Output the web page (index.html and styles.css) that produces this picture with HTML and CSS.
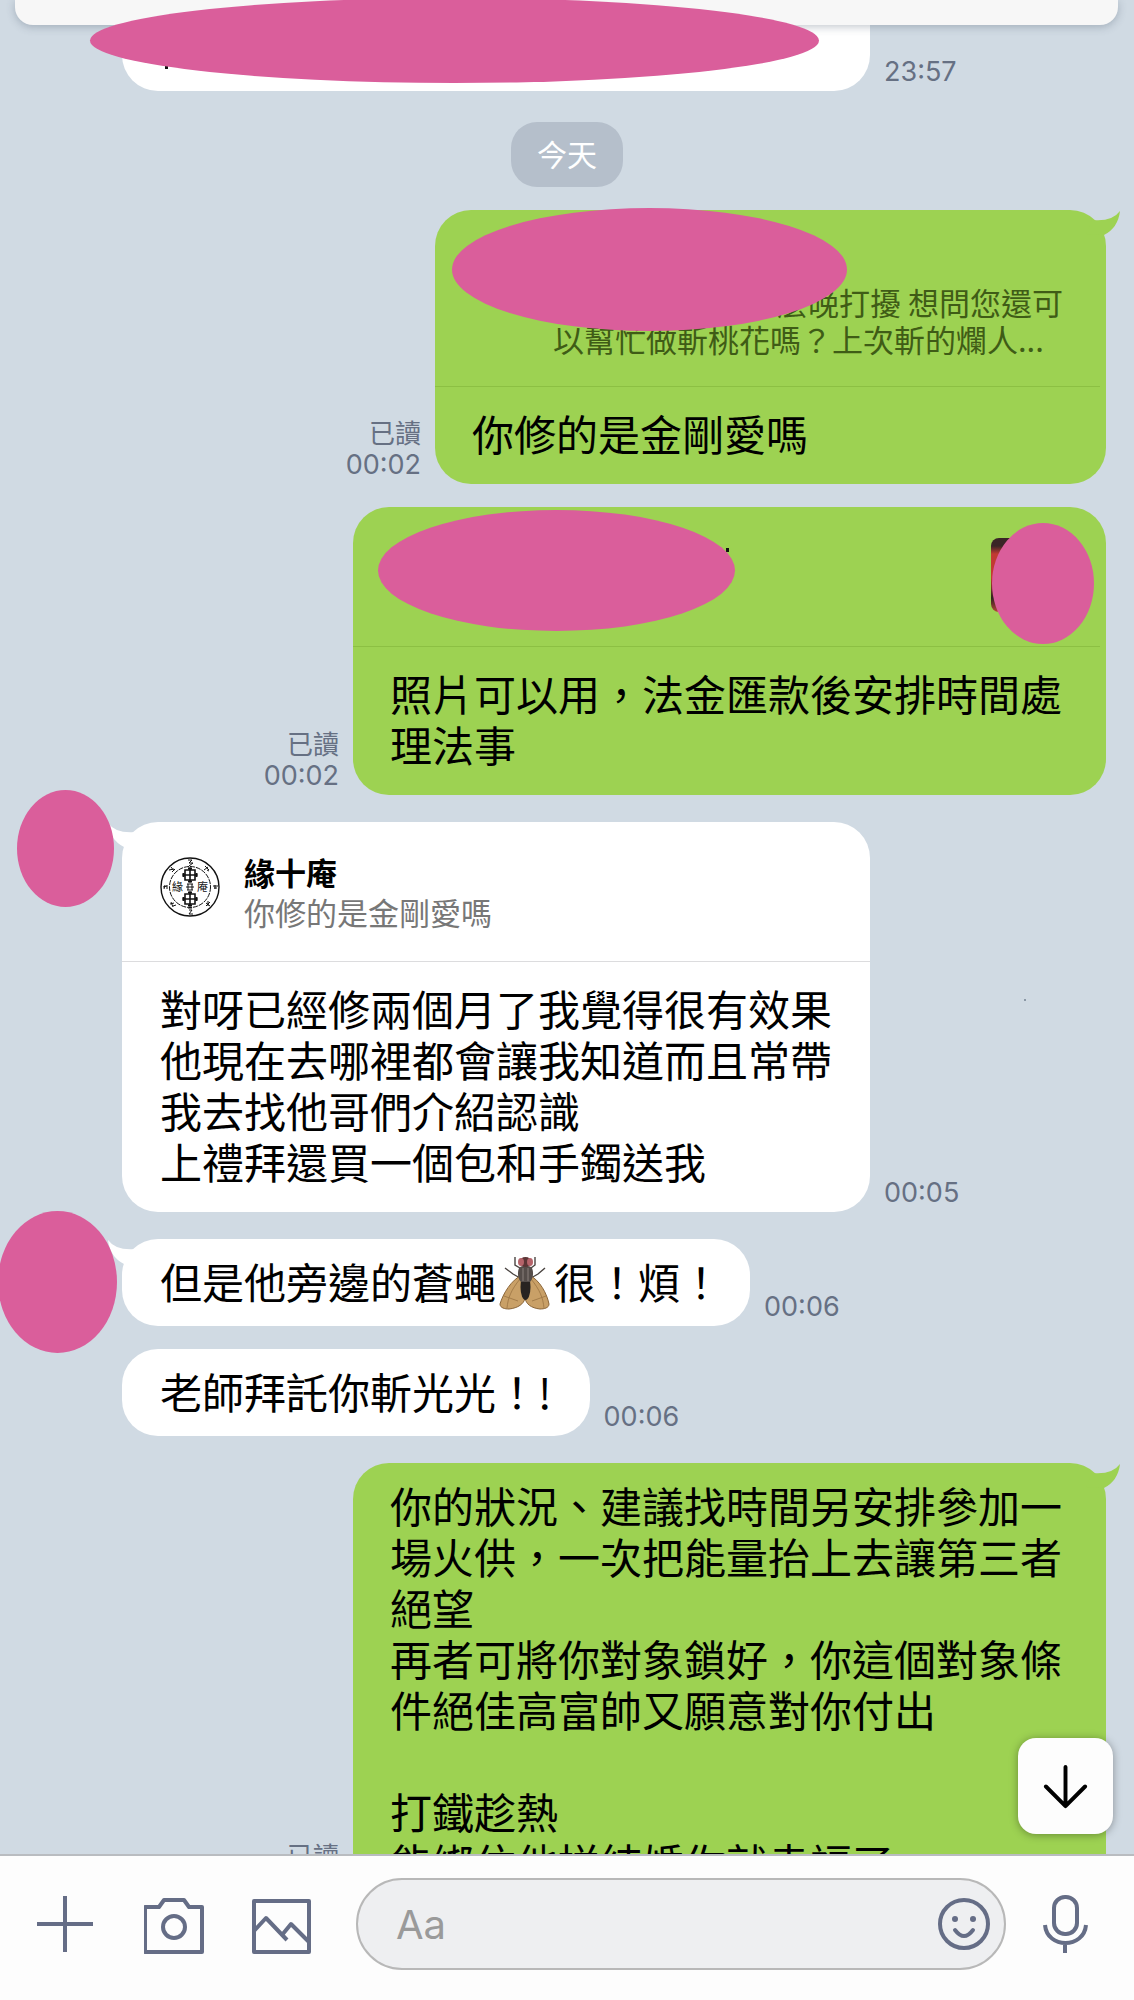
FILE: index.html
```html
<!DOCTYPE html>
<html lang="zh-Hant">
<head>
    <meta charset="UTF-8">
    <meta name="viewport" content="width=device-width, initial-scale=1.0">
    <title>緣十庵</title>
    <link rel="stylesheet" href="styles.css">
</head>
<body>

    <main class="chat">
        <div class="notice"></div>

        <div class="message">
            <div class="bubble bubble-first">
                <span class="cover cover-first"></span>
                <span class="tick tick-first"></span>
            </div>
            <div class="meta"><time>23:57</time></div>
        </div>

        <div class="date"><span>今天</span></div>

        <div class="message mine">
            <div class="meta"><span>已讀</span><time>00:02</time></div>
            <div class="bubble">
                <svg class="tail" viewBox="0 0 44 30"><path d="M16 10 Q36 12 44 1 Q42 18 28 25 L10 24 Z"/></svg>
                <div class="quote quote-long">
                    <p class="line-end">麼晚打擾 想問您還可</p>
                    <p>以幫忙做斬桃花嗎？上次斬的爛人...</p>
                    <span class="cover cover-name"></span>
                </div>
                <p class="text">你修的是金剛愛嗎</p>
            </div>
        </div>

        <div class="message mine">
            <div class="meta"><span>已讀</span><time>00:02</time></div>
            <div class="bubble">
                <div class="quote">
                    <span class="tick tick-quote"></span>
                    <span class="thumb"></span>
                    <span class="cover cover-quote"></span>
                    <span class="cover cover-thumb"></span>
                </div>
                <p class="text">照片可以用，法金匯款後安排時間處<br>理法事</p>
            </div>
        </div>

        <div class="message new-sender">
            <span class="cover avatar"></span>
            <div class="bubble">
                <svg class="tail" viewBox="0 0 44 30"><path d="M16 10 Q36 12 44 1 Q42 18 28 25 L10 24 Z"/></svg>
                <div class="quote">
                    <svg class="logo" viewBox="0 0 60 60" fill="none" stroke="#111">
                        <circle cx="30" cy="30" r="29" stroke-width="1.4"/>
                        <circle cx="30" cy="30" r="20.5" stroke-width="1" stroke-dasharray="5 1"/>
                        <g id="seal" stroke-width="1.6">
                            <path d="M25 13h10v10H25zM30 10.500v15M22.500 18h15"/>
                            <path d="M23.500 16v4M36.500 16v4M28 11.500h4M28 24.500h4" stroke-width="2"/>
                        </g>
                        <use href="#seal" y="24"/>
                        <path stroke-width="1" d="M27 27h6M26 30h8M27 33h6M28 27v6M32 27v6"/>
                        <path stroke-width="1" d="M28 3h4l-3 3h4l-4 3M11 10l3 4M9 13l5-1M12 15l3-3M45 9l4 4M44 13l4-3M47 13l2 1M3 30l4-1M5 28l-1 4M7 28v4M53 29h5M54 31h3M55 28v4M10 47l4-1M11 45l2 5M13 49l3-1M46 46l4 3M50 45l-4 4M48 44v5M28 51h4M29 53h3l-3 4h4"/>
                    </svg>
                    <div>
                        <p class="name">緣十庵</p>
                        <p class="quoted">你修的是金剛愛嗎</p>
                    </div>
                    <span class="logo-text">緣</span>
                    <span class="logo-text logo-text-end">庵</span>
                </div>
                <p class="text">對呀已經修兩個月了我覺得很有效果<br>他現在去哪裡都會讓我知道而且常帶<br>我去找他哥們介紹認識<br>上禮拜還買一個包和手鐲送我</p>
            </div>
            <div class="meta"><time>00:05</time></div>
            <span class="speck"></span>
        </div>

        <div class="message new-sender">
            <span class="cover avatar avatar-large"></span>
            <div class="bubble bubble-tight">
                <svg class="tail" viewBox="0 0 44 30"><path d="M16 10 Q36 12 44 1 Q42 18 28 25 L10 24 Z"/></svg>
                <p class="text">但是他旁邊的蒼蠅<svg class="fly" viewBox="0 0 58 54">
                    <g fill="none" stroke="#4b4542" stroke-width="1.400">
                        <path d="M24 12l-5-3V1M35 12l4-3V1M24 22l-7-4-8-6M35 22l7-4 7-6"/>
                    </g>
                    <path d="M26 19C15 24 7 38 4 48c0 4 5 5 9 5 9-1 15-5 16-11z" fill="#c9a067" stroke="#8b6538"/>
                    <path d="M33 19c11 5 18 19 20 29 0 4-5 5-9 5-9-1-14-5-15-11z" fill="#c9a067" stroke="#8b6538"/>
                    <path d="M24 23C15 34 12 42 11 52M35 23c9 11 12 19 13 29M8 40l14 5M50 40l-14 5" fill="none" stroke="#9a7443" stroke-width=".8"/>
                    <ellipse cx="29.500" cy="31" rx="5" ry="13" fill="#282321"/>
                    <path d="M23 12c2-3 11-3 13 0 2 5 1 11-2 14h-9c-3-3-4-9-2-14z" fill="#554d4a"/>
                    <path d="M27 12v13M32 12v13" stroke="#8b817c"/>
                    <ellipse cx="29.500" cy="6" rx="6" ry="5" fill="#5c3536"/>
                    <ellipse cx="25" cy="6" rx="3" ry="4" fill="#b5636a"/>
                    <ellipse cx="34" cy="6" rx="3" ry="4" fill="#b5636a"/>
                </svg>很！煩！</p>
            </div>
            <div class="meta"><time>00:06</time></div>
        </div>

        <div class="message">
            <div class="bubble">
                <p class="text">老師拜託你斬光光！!</p>
            </div>
            <div class="meta"><time>00:06</time></div>
        </div>

        <div class="message mine new-sender">
            <div class="meta"><span>已讀</span><time>00:06</time></div>
            <div class="bubble">
                <svg class="tail" viewBox="0 0 44 30"><path d="M16 10 Q36 12 44 1 Q42 18 28 25 L10 24 Z"/></svg>
                <p class="text">你的狀況、建議找時間另安排參加一<br>場火供，一次把能量抬上去讓第三者<br>絕望<br>再者可將你對象鎖好，你這個對象條<br>件絕佳高富帥又願意對你付出<br><br>打鐵趁熱<br>能綁住他拼結婚你就幸福了</p>
            </div>
        </div>

        <button class="scroll-down" type="button" aria-label="捲到最新訊息">
            <svg viewBox="0 0 48 48"><path d="M24 4v40M4 24l20 20 20-20"/></svg>
        </button>
    </main>

    <form class="composer">
        <button type="button" aria-label="新增">
            <svg viewBox="0 0 60 60"><path d="M29 2v56M1 30h56"/></svg>
        </button>
        <button type="button" aria-label="相機">
            <svg viewBox="0 0 60 60" stroke-linejoin="round">
                <path d="M1 13h14l5-7h20l5 7h13v45H1z"/>
                <circle cx="30" cy="33" r="11"/>
            </svg>
        </button>
        <button type="button" aria-label="照片">
            <svg viewBox="0 0 60 60" stroke-linejoin="round">
                <path d="M2 7h55v51H2zM2 37l12-13 21 22M30 41l9-11 18 18"/>
            </svg>
        </button>
        <div class="field">
            <input type="text" placeholder="Aa" aria-label="輸入訊息">
            <button type="button" aria-label="貼圖">
                <svg viewBox="0 0 52 52">
                    <circle cx="26" cy="26" r="24"/>
                    <path d="M17 32q9 12 18 0"/>
                    <circle class="eye" cx="17" cy="21" r="3"/>
                    <circle class="eye" cx="35" cy="21" r="3"/>
                </svg>
            </button>
        </div>
        <button class="mic" type="button" aria-label="語音訊息">
            <svg viewBox="0 0 46 60">
                <rect x="12" y="3" width="23" height="37" rx="11"/>
                <path d="M3 31c2 24 39 24 41 0M23 49v10"/>
            </svg>
        </button>
    </form>

</body>
</html>
```
FILE: styles.css
```css
* {
    box-sizing: border-box;
}

body {
    display: flex;
    flex-direction: column;
    height: 100vh;
    margin: 0;
    background-color: #d0dae3;
    color: #000;
    font-family: Inter, "Noto Sans CJK TC", sans-serif;
}

p {
    margin: 0;
}

button {
    padding: 0;
    border: none;
    background: none;
    cursor: pointer;
}

button svg {
    display: block;
    width: 100%;
    fill: none;
    stroke: #656d86;
    stroke-width: 4;
}

.chat {
    position: relative;
    flex: 1;
    min-height: 0;
    overflow: hidden;
    padding: 0 28px 0 122px;
}

.notice {
    position: absolute;
    top: 0;
    left: 15px;
    right: 16px;
    z-index: 1;
    height: 25px;
    border-radius: 0 0 18px 18px;
    background-color: #f7f7f7;
    box-shadow: 0 2px 8px rgba(60, 75, 95, 0.3);
}

.message {
    position: relative;
    display: flex;
    align-items: flex-end;
    gap: 14px;
    margin-top: 23px;
}

.message.new-sender {
    margin-top: 27px;
}

.notice + .message {
    margin-top: 0;
}

.mine {
    justify-content: flex-end;
}

.bubble {
    position: relative;
    border-radius: 36px;
    background-color: #fff;
}

.mine .bubble {
    background-color: #9dd252;
}

.bubble-first {
    width: 748px;
    height: 91px;
    border-radius: 0 0 36px 36px;
}

.tail {
    position: absolute;
    top: 0;
    left: -14px;
    width: 44px;
    height: 30px;
    fill: #fff;
    transform: scaleX(-1);
}

.mine .tail {
    left: auto;
    right: -14px;
    fill: #9dd252;
    transform: none;
}

.text {
    padding: 16px 38px 20px;
    font-family: "Noto Sans CJK TC", sans-serif;
    font-size: 42px;
    line-height: 51px;
    white-space: nowrap;
}

.mine .text {
    padding-left: 37px;
    padding-right: 44px;
}

.bubble-tight .text {
    padding-right: 28px;
}

.quote + .text {
    padding-top: 20px;
    padding-bottom: 26px;
}

.fly {
    width: 58px;
    height: 54px;
    margin: -18px 0 -8px;
    vertical-align: middle;
}

.quote {
    position: relative;
    display: flex;
    align-items: flex-start;
    gap: 24px;
    height: 140px;
    padding: 30px 38px 0;
    border-bottom: 1px solid #dcdcde;
    color: #777;
    font-family: "Noto Sans CJK TC", sans-serif;
    font-size: 31px;
    line-height: 40px;
}

.mine .quote {
    margin-right: 6px;
    border-bottom-color: #8cc043;
    color: #3f5c16;
}

.mine .quote-long {
    display: block;
    height: 177px;
    padding: 73px 37px 0 118px;
    line-height: 37px;
    white-space: nowrap;
}

.quote-long p {
    width: 510px;
}

.line-end {
    text-align: right;
}

.name {
    color: #000;
    font-weight: 700;
}

.logo {
    flex: none;
    width: 60px;
    height: 60px;
    margin-top: 5px;
}

/* the two characters printed inside the round logo */
.logo-text {
    position: absolute;
    left: 50px;
    top: 58px;
    color: #111;
    font-size: 11px;
    line-height: 12px;
}

.logo-text-end {
    left: 75px;
}

.meta {
    display: flex;
    flex-direction: column;
    align-items: flex-end;
    padding-bottom: 4px;
    color: #667083;
    font-size: 27px;
    line-height: 31px;
}

.meta span {
    font-size: 26px;
}

/* centred on the window, not on the message column */
.date {
    margin: 31px -28px 0 -122px;
    text-align: center;
}

.date span {
    display: inline-block;
    padding: 11px 26px 13px;
    border-radius: 26px;
    background-color: #b5bfcb;
    color: #fff;
    font-family: "Noto Sans CJK TC", sans-serif;
    font-size: 30px;
    line-height: 41px;
    vertical-align: top;
}

/* pink ovals that hide names and avatars */
.cover {
    position: absolute;
    z-index: 2;
    border-radius: 50%;
    background-color: #da5e9b;
}

.cover-first {
    left: -32px;
    top: -2px;
    width: 729px;
    height: 85px;
}

.cover-name {
    left: 17px;
    top: -2px;
    width: 395px;
    height: 123px;
}

.cover-quote {
    left: 25px;
    top: 3px;
    width: 357px;
    height: 121px;
}

.cover-thumb {
    right: 6px;
    top: 16px;
    width: 102px;
    height: 121px;
}

.avatar {
    left: -105px;
    top: -32px;
    width: 97px;
    height: 117px;
}

.avatar-large {
    left: -124px;
    top: -28px;
    width: 119px;
    height: 142px;
}

.thumb {
    position: absolute;
    right: 35px;
    top: 31px;
    width: 74px;
    height: 74px;
    border-radius: 8px;
    background: linear-gradient(#3a2526 8px, #c23a32 16px, #c23a32 40px, #33231f 60px, #b5473a 74px);
}

.tick {
    position: absolute;
    width: 3px;
    height: 4px;
    background-color: #111;
}

.tick-first {
    left: 43px;
    top: 65px;
}

.tick-quote {
    left: 373px;
    top: 41px;
}

.speck {
    position: absolute;
    left: 902px;
    top: 177px;
    width: 2px;
    height: 2px;
    background-color: #8b98a6;
}

.scroll-down {
    position: absolute;
    right: 21px;
    bottom: 20px;
    z-index: 2;
    width: 95px;
    height: 96px;
    padding: 24px;
    border-radius: 18px;
    background-color: #fdfdfd;
    box-shadow: 0 1px 8px rgba(0, 0, 0, 0.35);
}

.scroll-down svg {
    stroke: #000;
    stroke-linecap: round;
    stroke-linejoin: round;
}

.composer {
    display: flex;
    align-items: center;
    gap: 48px;
    height: 146px;
    padding: 0 46px 8px 36px;
    border-top: 2px solid #b9bcc0;
    background-color: #fdfdfd;
}

.composer > button {
    flex: none;
    width: 60px;
}

.composer .mic {
    width: 46px;
    margin-left: -12px;
}

.field {
    display: flex;
    flex: 1;
    align-items: center;
    min-width: 0;
    height: 92px;
    margin-left: -4px;
    padding: 0 14px 0 38px;
    border: 2px solid #b8b8b8;
    border-radius: 46px;
    background-color: #eeeff1;
}

.field input {
    flex: 1;
    min-width: 0;
    padding: 0;
    border: none;
    outline: none;
    background: none;
    font-family: Inter, "Noto Sans CJK TC", sans-serif;
    font-size: 40px;
}

.field input::placeholder {
    color: #9a9a9a;
}

.field button {
    flex: none;
    width: 52px;
}

.field path {
    stroke-linecap: round;
}

.eye {
    fill: #656d86;
    stroke: none;
}
```
